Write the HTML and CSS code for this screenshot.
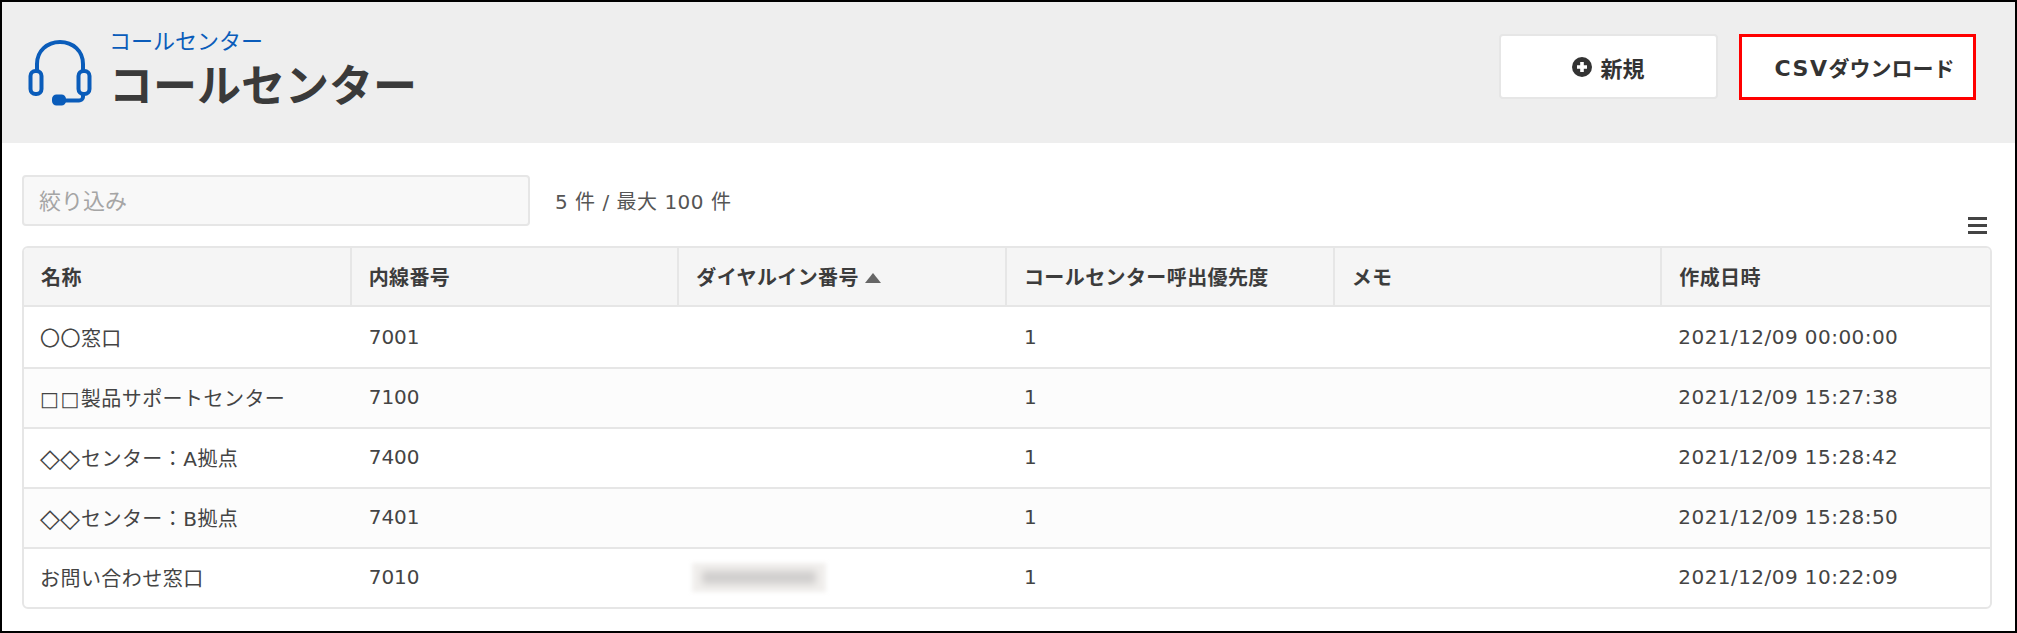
FILE: index.html
```html
<!DOCTYPE html>
<html lang="ja">
<head>
<meta charset="utf-8">
<title>コールセンター</title>
<link rel="stylesheet" href="styles.css">
</head>
<body>
<div class="frame">
  <header class="head">
    <div class="brand">
      <svg class="brand-icon" viewBox="0 0 64 66" fill="none" stroke="#0a5cba" stroke-width="4" stroke-linecap="round" stroke-linejoin="round">
        <path d="M9 31V24C9 11 19 2 32 2s23 9 23 22v7"/>
        <rect x="2.5" y="31" width="11" height="23" rx="5"/>
        <rect x="50.500" y="31" width="11" height="23" rx="5"/>
        <path d="M55 54v3c0 2-2 3.500-4 3.500H30"/>
        <rect x="25.500" y="56" width="11" height="8" rx="3" fill="#0a5cba" stroke-width="3"/>
      </svg>
      <div class="brand-text">
        <div class="crumb">コールセンター</div>
        <h1 class="title">コールセンター</h1>
      </div>
    </div>
    <div class="actions">
      <button class="btn">
        <svg class="plus" viewBox="0 0 20 20"><circle cx="10" cy="10" r="10" fill="#333"/><path d="M10 5v10M5 10h10" stroke="#fff" stroke-width="3.600"/></svg>
        新規
      </button>
      <button class="btn btn-marked"><span><span class="latin">CSV</span>ダウンロード</span></button>
    </div>
  </header>
  <main class="main">
    <div class="filter-row">
      <div class="filter">絞り込み</div>
      <div class="count">5 件 / 最大 100 件</div>
    </div>
    <div class="menu-row">
      <span class="menu"><i></i><i></i><i></i></span>
    </div>
    <div class="table-wrap">
      <table class="grid">
        <thead>
          <tr>
            <th>名称</th>
            <th>内線番号</th>
            <th>ダイヤルイン番号 <span class="sort"></span></th>
            <th>コールセンター呼出優先度</th>
            <th>メモ</th>
            <th>作成日時</th>
          </tr>
        </thead>
        <tbody>
          <tr><td>〇〇窓口</td><td class="num">7001</td><td></td><td class="num">1</td><td></td><td>2021/12/09 00:00:00</td></tr>
          <tr><td><span class="box">□□</span>製品サポートセンター</td><td class="num">7100</td><td></td><td class="num">1</td><td></td><td>2021/12/09 15:27:38</td></tr>
          <tr><td><span class="diamond">◇◇</span>センター：A拠点</td><td class="num">7400</td><td></td><td class="num">1</td><td></td><td>2021/12/09 15:28:42</td></tr>
          <tr><td><span class="diamond">◇◇</span>センター：B拠点</td><td class="num">7401</td><td></td><td class="num">1</td><td></td><td>2021/12/09 15:28:50</td></tr>
          <tr><td>お問い合わせ窓口</td><td class="num">7010</td><td><span class="masked"><i></i></span></td><td class="num">1</td><td></td><td>2021/12/09 10:22:09</td></tr>
        </tbody>
      </table>
    </div>
  </main>
</div>
</body>
</html>
```
FILE: styles.css
```css
* { box-sizing: border-box; }
html, body { margin: 0; padding: 0; background: #fff; }
body {
  font-family: "DejaVu Sans", "Noto Sans CJK JP", sans-serif;
  font-size: 20px;
  color: #444;
}
.frame {
  height: 633px;
  border: 2px solid #000;
  overflow: hidden;
}
.head {
  height: 141px;
  background: #eee;
  display: flex;
  justify-content: space-between;
  align-items: flex-start;
  padding: 32px 39px 0 26px;
}
.brand { display: flex; gap: 17px; }
.brand-icon { width: 64px; height: 66px; margin-top: 6px; flex: none; }
.brand-text { margin-top: -8px; }
.crumb {
  font-family: "Noto Sans CJK JP", sans-serif;
  font-size: 22px;
  line-height: 26px;
  color: #0a5cba;
}
.title {
  margin: 3px 0 0;
  font-family: "Noto Sans CJK JP", sans-serif;
  font-size: 44px;
  line-height: 56px;
  font-weight: 700;
  color: #3a3a3a;
}
.actions { display: flex; gap: 21px; }
.btn {
  display: flex;
  align-items: center;
  justify-content: center;
  gap: 8px;
  height: 65px;
  width: 219px;
  background: #fff;
  border: 2px solid #e6e6e6;
  border-radius: 4px;
  font-family: "DejaVu Sans", "Noto Sans CJK JP", sans-serif;
  font-size: 22px;
  font-weight: 700;
  color: #333;
}
.btn-marked {
  width: 237px;
  height: 66px;
  padding: 0 0 0 14px;
  border: 3px solid #f00;
  border-radius: 0;
  font-size: 21px;
}
.latin { font-size: 22px; letter-spacing: 1.5px; }
.plus { width: 20px; height: 20px; }
.main { padding: 32px 23px 0 20px; }
.filter-row { display: flex; align-items: center; gap: 25px; }
.filter {
  width: 508px;
  height: 51px;
  padding: 0 0 3px 15px;
  display: flex;
  align-items: center;
  background: #f8f8f8;
  border: 2px solid #e6e6e6;
  border-radius: 4px;
  color: #a5a5a5;
  font-family: "Noto Sans CJK JP", sans-serif;
  font-size: 22px;
}
.count { color: #555; letter-spacing: .5px; }
.menu-row {
  height: 20px;
  display: flex;
  justify-content: flex-end;
  padding: 0 5px 0 0;
}
.menu {
  width: 19px;
  height: 17px;
  margin-top: -9px;
  display: flex;
  flex-direction: column;
  justify-content: space-between;
}
.menu i { display: block; height: 3px; background: #444; }
.table-wrap {
  border: 2px solid #e6e6e6;
  border-radius: 6px;
  overflow: hidden;
}
.grid {
  width: 100%;
  table-layout: fixed;
  border-collapse: separate;
  border-spacing: 0;
}
.grid th {
  height: 59px;
  padding: 0 16px 0 17px;
  text-align: left;
  font-weight: 700;
  font-size: 20px;
  letter-spacing: .4px;
  color: #3c3c3c;
  background: #f5f5f5;
  border-right: 2px solid #e6e6e6;
  border-bottom: 2px solid #e6e6e6;
}
.grid th:last-child { border-right: 0; }
.grid td {
  height: 60px;
  padding: 0 16px 2px;
  border-top: 2px solid #e6e6e6;
  white-space: nowrap;
  letter-spacing: .45px;
}
.grid td.num { letter-spacing: 0; padding-left: 17px; }
.grid tbody tr:first-child td { border-top-color: transparent; }
.grid tbody tr:nth-child(even) td { background: #fcfcfc; }
.box { letter-spacing: 1.5px; }
.diamond {
  display: inline-block;
  font-size: 26px;
  line-height: 20px;
  letter-spacing: 0;
  width: 40px;
  margin-right: 1px;
  vertical-align: -1px;
}
.sort {
  display: inline-block;
  width: 0;
  height: 0;
  margin-left: -1px;
  vertical-align: 2px;
  border-left: 8px solid transparent;
  border-right: 8px solid transparent;
  border-bottom: 10px solid #666;
}
.masked {
  display: block;
  width: 134px;
  height: 29px;
  margin-left: -3px;
  padding: 8px 10px;
  background: #f1efed;
  filter: blur(2px);
}
.masked i {
  display: block;
  height: 13px;
  background: #cfcdcc;
  filter: blur(3px);
}
```
